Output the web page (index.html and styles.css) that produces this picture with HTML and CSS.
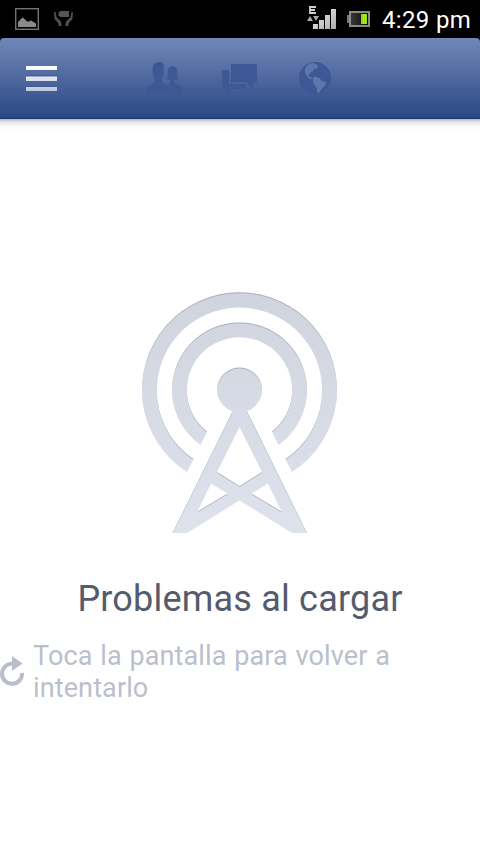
FILE: index.html
```
<!DOCTYPE html>
<html lang="es">
<head>
<meta charset="utf-8">
<title>Problemas al cargar</title>
<link rel="stylesheet" href="styles.css">
</head>
<body>
<header class="status">
  <svg class="status-left" width="80" height="38" viewBox="0 0 80 38">
    <rect x="15.700" y="8.700" width="22.600" height="20.600" fill="none" stroke="#747474" stroke-width="1.400"/>
    <path d="M18 27v-5l4-4 1-.5 4 4h2l2-1 5 3v3.500z" fill="#8a8a8a"/>
    <path d="M60 11h9v6h-9v-1h-1.500v-4H60z" fill="#555"/>
    <path d="M54 12h1.500l1.200 5.500 4.300 4 .8 4.500h-3l-.6-3L54.500 19zM73 12h-1.500l-1.200 5.500-4.300 4-.8 4.500h3l.6-3 3.700-4z" fill="#4f4f4f"/>
  </svg>
  <div class="status-right">
    <svg width="66" height="38" viewBox="306 0 66 38">
      <defs>
        <linearGradient id="bars" x1="0" y1="0" x2="1" y2="1"><stop offset="0" stop-color="#f4f4f4"/><stop offset="1" stop-color="#aaa"/></linearGradient>
        <linearGradient id="cell" x1="0" y1="0" x2="1" y2="0"><stop offset="0" stop-color="#3b3b3b"/><stop offset="1" stop-color="#050505"/></linearGradient>
      </defs>
      <path d="M316 7h-6v6h6M310 10h5" fill="none" stroke="#d0d0d0" stroke-width="1.800"/>
      <path d="M307 21l3-5 3 5zM313 16h6l-3 5z" fill="#a8a8a8"/>
      <path d="M313 24h5v5h-5zM319 20h5v9h-5zM325 15h5v14h-5zM331 9h5v20h-5z" fill="url(#bars)"/>
      <path d="M347 15h3v8h-3z" fill="#777"/>
      <rect x="350" y="12" width="19" height="14" fill="url(#cell)" stroke="#8b8b86" stroke-width="2"/>
      <path d="M361 14h6v10h-6z" fill="#94d60e"/>
      <path d="M363.500 14v10M365.500 14v10" stroke="#c4f36a" stroke-width=".7"/>
    </svg>
    <span class="clock">4:29 pm</span>
  </div>
</header>
<nav class="bar">
  <svg width="480" height="81" viewBox="0 38 480 81">
    <defs>
      <linearGradient id="menu" gradientUnits="userSpaceOnUse" x1="0" y1="66" x2="0" y2="91"><stop offset="0" stop-color="#fff"/><stop offset="1" stop-color="#bec7dd"/></linearGradient>
    </defs>
    <path d="M26 75.500h31M26 86.500h31" stroke="#3f5688" opacity=".6"/>
    <path d="M26 66h31v4H26zM26 76.500h31v4.500H26zM26 87h31v4H26z" fill="url(#menu)"/>
    <g fill="#3e5895">
      <path d="M145.700 94c0-4 .5-6.500 2-7.500l7-3.700c.7-1 .6-3-.2-4.800-1.500-1.500-2-3.500-1.900-6-.2-6 .8-8.500 4.400-9.500l4-.8c2.500 1.300 3 4 2.900 8.300.1 3.500-.2 6-1.700 8-.5 1.800-.5 3.500.3 4.600l6.500 3.400c1.500 1.200 2 4 2 8z"/>
      <path d="M172 94c0-4.500-.8-7.500-3.700-9.500l2.200-1.500c.5-1 .5-2 0-3.200l-3.700-.8c1.200-2.500.6-5 .9-7.500.5-3.500 2-5.200 4.800-5.200s4.500 1.700 4.800 5.200c.2 3-.1 5.500 1.200 7.500l-4 .8c-.4 1.400-.3 2.600.3 3.500l6 2.700c1.700 1 2.400 4 2.400 8z"/>
      <path d="M231 64h26v18h-4v6.500L246.500 82H231z"/>
      <path d="M222 70h7v14h17v5h-13l-7 7v-7h-4z"/>
      <circle cx="315" cy="78" r="16"/>
    </g>
    <g fill="#5e76ac">
      <path d="M305 68c2-3 4.500-4.500 7.500-5.200l5 2 .7 2.700-2.200 1.500-1.800-1-.5 2.500-3 2-1.700 2.300.4 1.700 2 .5.800 2.500-3.200-1-3.500-4.500-.7-3.500z"/>
      <path d="M312.500 78l3-1.500 4.500 2 1.500 2.500 4.800 1.200c-.5 3-1.800 5-3.800 5.500l-3.500 5.300-1.600-.5-.8-5-3-3.500z"/>
    </g>
  </svg>
</nav>
<main class="content">
  <svg class="tower" width="196" height="241" viewBox="142 292 196 241">
    <defs>
      <linearGradient id="fill" gradientUnits="userSpaceOnUse" x1="0" y1="292" x2="0" y2="533"><stop offset="0" stop-color="#d0d4df"/><stop offset="1" stop-color="#dee2ed"/></linearGradient>
      <filter id="inset" x="-5%" y="-5%" width="110%" height="110%" color-interpolation-filters="sRGB">
        <feOffset in="SourceAlpha" dy=".5" result="shifted"/>
        <feGaussianBlur in="shifted" stdDeviation=".7" result="soft"/>
        <feComposite in="SourceAlpha" in2="soft" operator="out" result="edge"/>
        <feFlood flood-color="#858b99" flood-opacity=".5"/>
        <feComposite in2="edge" operator="in" result="shade"/>
        <feMerge><feMergeNode in="SourceGraphic"/><feMergeNode in="shade"/></feMerge>
      </filter>
    </defs>
    <g fill="url(#fill)" filter="url(#inset)">
      <path d="M187 472A97.500 97.500 0 1 1 292 472L285.500 459A82.700 82.700 0 1 0 193.500 459Z"/>
      <path d="M200.500 445A67.500 67.500 0 1 1 278.500 445L272 431.500A52.700 52.700 0 1 0 207 431.500Z"/>
      <path fill-rule="evenodd" d="M232 411.200A22.500 22.500 0 1 1 247 411.200L307 533H292L239.500 500.500 187 533H172.500L232.500 411.500ZM239.500 427L217 472 239.500 486 262 472ZM211 483.500L197.500 511.500 227.500 493.500ZM268 483.500L251.500 493.500 281.500 511.500Z"/>
    </g>
  </svg>
  <h1 class="title">Problemas al cargar</h1>
  <div class="retry">
    <svg width="25" height="32" viewBox="0 656 25 32">
      <path d="M12 663.800A10 10 0 1 0 22 673" fill="none" stroke="#b9becb" stroke-width="4"/>
      <path d="M12 656L22.500 663.500 12 671z" fill="#b9becb"/>
    </svg>
    <p class="hint">Toca la pantalla para volver a<br>intentarlo</p>
  </div>
</main>
</body>
</html>
```
FILE: styles.css
```
* { box-sizing: border-box; }

body {
  margin: 0;
  width: 480px;
  height: 854px;
  overflow: hidden;
  background: #000;
  font-family: Roboto, "Noto Sans", sans-serif;
}

svg { display: block; }

.status {
  display: flex;
  justify-content: space-between;
  height: 38px;
}

.status-right {
  display: flex;
  padding-right: 9px;
}

.clock {
  width: 89px;
  margin-left: 10px;
  color: #fff;
  font-size: 24px;
  line-height: 40px;
  letter-spacing: 0.35px;
  white-space: nowrap;
}

.bar {
  height: 81px;
  overflow: hidden;
  border-radius: 4px 4px 0 0;
  background: linear-gradient(#6f86b8, #6980b2 12%, #2e4b88 94%, #2b4887 97%, #203a78);
}

.content {
  display: flex;
  flex-direction: column;
  align-items: center;
  height: 735px;
  padding-top: 173px;
  background: linear-gradient(#b4b4b4, #e6e6e6 3px, #f8f8f8 7px, #fff 11px);
}

.title {
  margin: 44px 0 0;
  color: #545b6d;
  font-size: 36px;
  font-weight: 400;
  line-height: 44px;
  letter-spacing: 0.2px;
  white-space: nowrap;
}

.retry {
  display: flex;
  align-items: center;
  align-self: flex-start;
  gap: 8px;
  margin-top: 19px;
}

.hint {
  margin: 0;
  color: #bbbfcc;
  font-size: 27px;
  line-height: 32px;
  letter-spacing: 0.12px;
  word-spacing: 0.9px;
  white-space: nowrap;
}
```
